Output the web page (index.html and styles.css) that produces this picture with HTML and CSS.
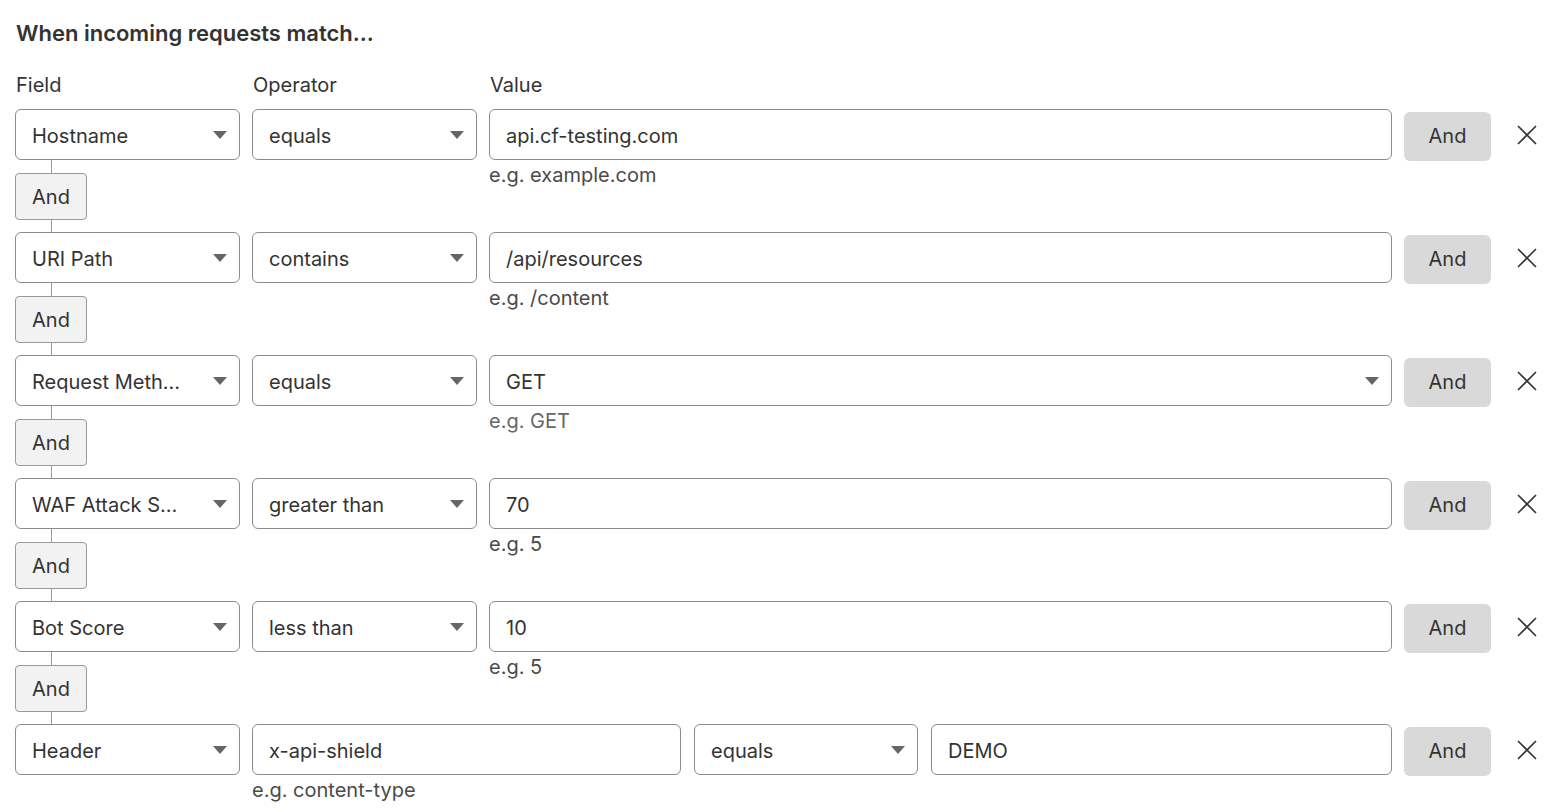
FILE: index.html
```html
<!DOCTYPE html>
<html lang="en">
<head>
  <meta charset="UTF-8">
  <meta name="viewport" content="width=device-width, initial-scale=1.0">
  <title>Rule expression builder</title>
  <link rel="stylesheet" href="styles.css">
</head>
<body>
  <h2 class="title">When incoming requests match...</h2>

  <div class="labels">
    <span>Field</span>
    <span>Operator</span>
    <span>Value</span>
  </div>

  <div class="rules">
    <!-- hostname -->
    <div class="rule">
      <div class="select"><span class="select-text">Hostname</span><span class="caret"></span></div>
      <div class="select"><span class="select-text">equals</span><span class="caret"></span></div>
      <div class="input">api.cf-testing.com</div>
      <button class="and-btn">And</button>
      <button class="remove-btn" aria-label="Remove">
        <svg width="22" height="22" viewBox="0 0 22 22"><path d="M2 2 L20 20 M20 2 L2 20" stroke="#333" stroke-width="1.6" fill="none"/></svg>
      </button>
      <div class="connector"><button class="join-btn">And</button></div>
      <div class="hint hint-value">e.g. example.com</div>
    </div>

    <!-- uri path -->
    <div class="rule">
      <div class="select"><span class="select-text">URI Path</span><span class="caret"></span></div>
      <div class="select"><span class="select-text">contains</span><span class="caret"></span></div>
      <div class="input">/api/resources</div>
      <button class="and-btn">And</button>
      <button class="remove-btn" aria-label="Remove">
        <svg width="22" height="22" viewBox="0 0 22 22"><path d="M2 2 L20 20 M20 2 L2 20" stroke="#333" stroke-width="1.6" fill="none"/></svg>
      </button>
      <div class="connector"><button class="join-btn">And</button></div>
      <div class="hint hint-value">e.g. /content</div>
    </div>

    <!-- request method -->
    <div class="rule">
      <div class="select"><span class="select-text">Request Method</span><span class="caret"></span></div>
      <div class="select"><span class="select-text">equals</span><span class="caret"></span></div>
      <div class="select"><span class="select-text">GET</span><span class="caret"></span></div>
      <button class="and-btn">And</button>
      <button class="remove-btn" aria-label="Remove">
        <svg width="22" height="22" viewBox="0 0 22 22"><path d="M2 2 L20 20 M20 2 L2 20" stroke="#333" stroke-width="1.6" fill="none"/></svg>
      </button>
      <div class="connector"><button class="join-btn">And</button></div>
      <div class="hint hint-value hint-muted">e.g. GET</div>
    </div>

    <!-- waf score -->
    <div class="rule">
      <div class="select"><span class="select-text">WAF Attack Score</span><span class="caret"></span></div>
      <div class="select"><span class="select-text">greater than</span><span class="caret"></span></div>
      <div class="input">70</div>
      <button class="and-btn">And</button>
      <button class="remove-btn" aria-label="Remove">
        <svg width="22" height="22" viewBox="0 0 22 22"><path d="M2 2 L20 20 M20 2 L2 20" stroke="#333" stroke-width="1.6" fill="none"/></svg>
      </button>
      <div class="connector"><button class="join-btn">And</button></div>
      <div class="hint hint-value">e.g. 5</div>
    </div>

    <!-- bot score -->
    <div class="rule">
      <div class="select"><span class="select-text">Bot Score</span><span class="caret"></span></div>
      <div class="select"><span class="select-text">less than</span><span class="caret"></span></div>
      <div class="input">10</div>
      <button class="and-btn">And</button>
      <button class="remove-btn" aria-label="Remove">
        <svg width="22" height="22" viewBox="0 0 22 22"><path d="M2 2 L20 20 M20 2 L2 20" stroke="#333" stroke-width="1.6" fill="none"/></svg>
      </button>
      <div class="connector"><button class="join-btn">And</button></div>
      <div class="hint hint-value">e.g. 5</div>
    </div>

    <!-- header -->
    <div class="rule">
      <div class="select"><span class="select-text">Header</span><span class="caret"></span></div>
      <div class="header-fields">
        <div class="input">x-api-shield</div>
        <div class="select"><span class="select-text">equals</span><span class="caret"></span></div>
        <div class="input">DEMO</div>
      </div>
      <button class="and-btn">And</button>
      <button class="remove-btn" aria-label="Remove">
        <svg width="22" height="22" viewBox="0 0 22 22"><path d="M2 2 L20 20 M20 2 L2 20" stroke="#333" stroke-width="1.6" fill="none"/></svg>
      </button>
      <div class="hint hint-header">e.g. content-type</div>
    </div>
  </div>
</body>
</html>
```

FILE: styles.css
```css
body {
  margin: 0;
  padding: 0 9px 0 15px;
  font-family: Inter, "Noto Sans", Arial, sans-serif;
  color: #333;
  background: #fff;
}

.title {
  margin: 20px 0 0 1px;
  font-size: 22px;
  font-weight: 600;
  line-height: 27px;
}

.labels {
  display: grid;
  grid-template-columns: 225px 225px 1fr;
  column-gap: 12px;
  margin-top: 26px;
  height: 36px;
  font-size: 20px;
  line-height: 24px;
}

.labels span {
  padding-left: 1px;
}

.rule {
  display: grid;
  grid-template-columns: 225px 225px 1fr 87px 48px;
  grid-template-rows: 51px auto;
  column-gap: 12px;
  align-items: center;
}

.select,
.input {
  box-sizing: border-box;
  height: 51px;
  border: 1px solid #8c8c8c;
  border-radius: 6px;
  background: #fff;
  display: flex;
  align-items: center;
  padding: 2px 12px 0 16px;
  font-size: 20px;
  color: #333;
  min-width: 0;
}

.select-text {
  flex: 1;
  white-space: nowrap;
  overflow: hidden;
  text-overflow: ellipsis;
  margin-right: 30px;
}

.caret {
  width: 0;
  height: 0;
  border-left: 7px solid transparent;
  border-right: 7px solid transparent;
  border-top: 8px solid #666;
  flex: none;
  margin-top: -1px;
}

.and-btn {
  height: 49px;
  margin-top: 3px;
  border: none;
  border-radius: 6px;
  background: #d9d9d9;
  font-family: inherit;
  font-size: 20px;
  color: #333;
  cursor: pointer;
}

.remove-btn {
  border: none;
  background: none;
  padding: 0;
  height: 51px;
  display: flex;
  align-items: center;
  justify-content: center;
  cursor: pointer;
}

.connector {
  grid-column: 1;
  grid-row: 2;
  align-self: stretch;
  padding: 13px 0 12px;
  background: linear-gradient(#999, #999) no-repeat 36px 0 / 1px 100%;
}

.join-btn {
  display: block;
  box-sizing: border-box;
  width: 72px;
  height: 47px;
  border: 1px solid #999;
  border-radius: 4px;
  background: #f2f2f2;
  font-family: inherit;
  font-size: 20px;
  color: #333;
  cursor: pointer;
}

.hint {
  grid-row: 2;
  align-self: start;
  margin-top: 3px;
  font-size: 20px;
  line-height: 24px;
  color: #4a4a4a;
}

.hint-muted {
  color: #666;
}

.hint-value {
  grid-column: 3;
}

.header-fields {
  grid-column: 2 / 4;
  display: grid;
  grid-template-columns: 429px 224px 1fr;
  column-gap: 13px;
}

.hint-header {
  grid-column: 2;
}
```
